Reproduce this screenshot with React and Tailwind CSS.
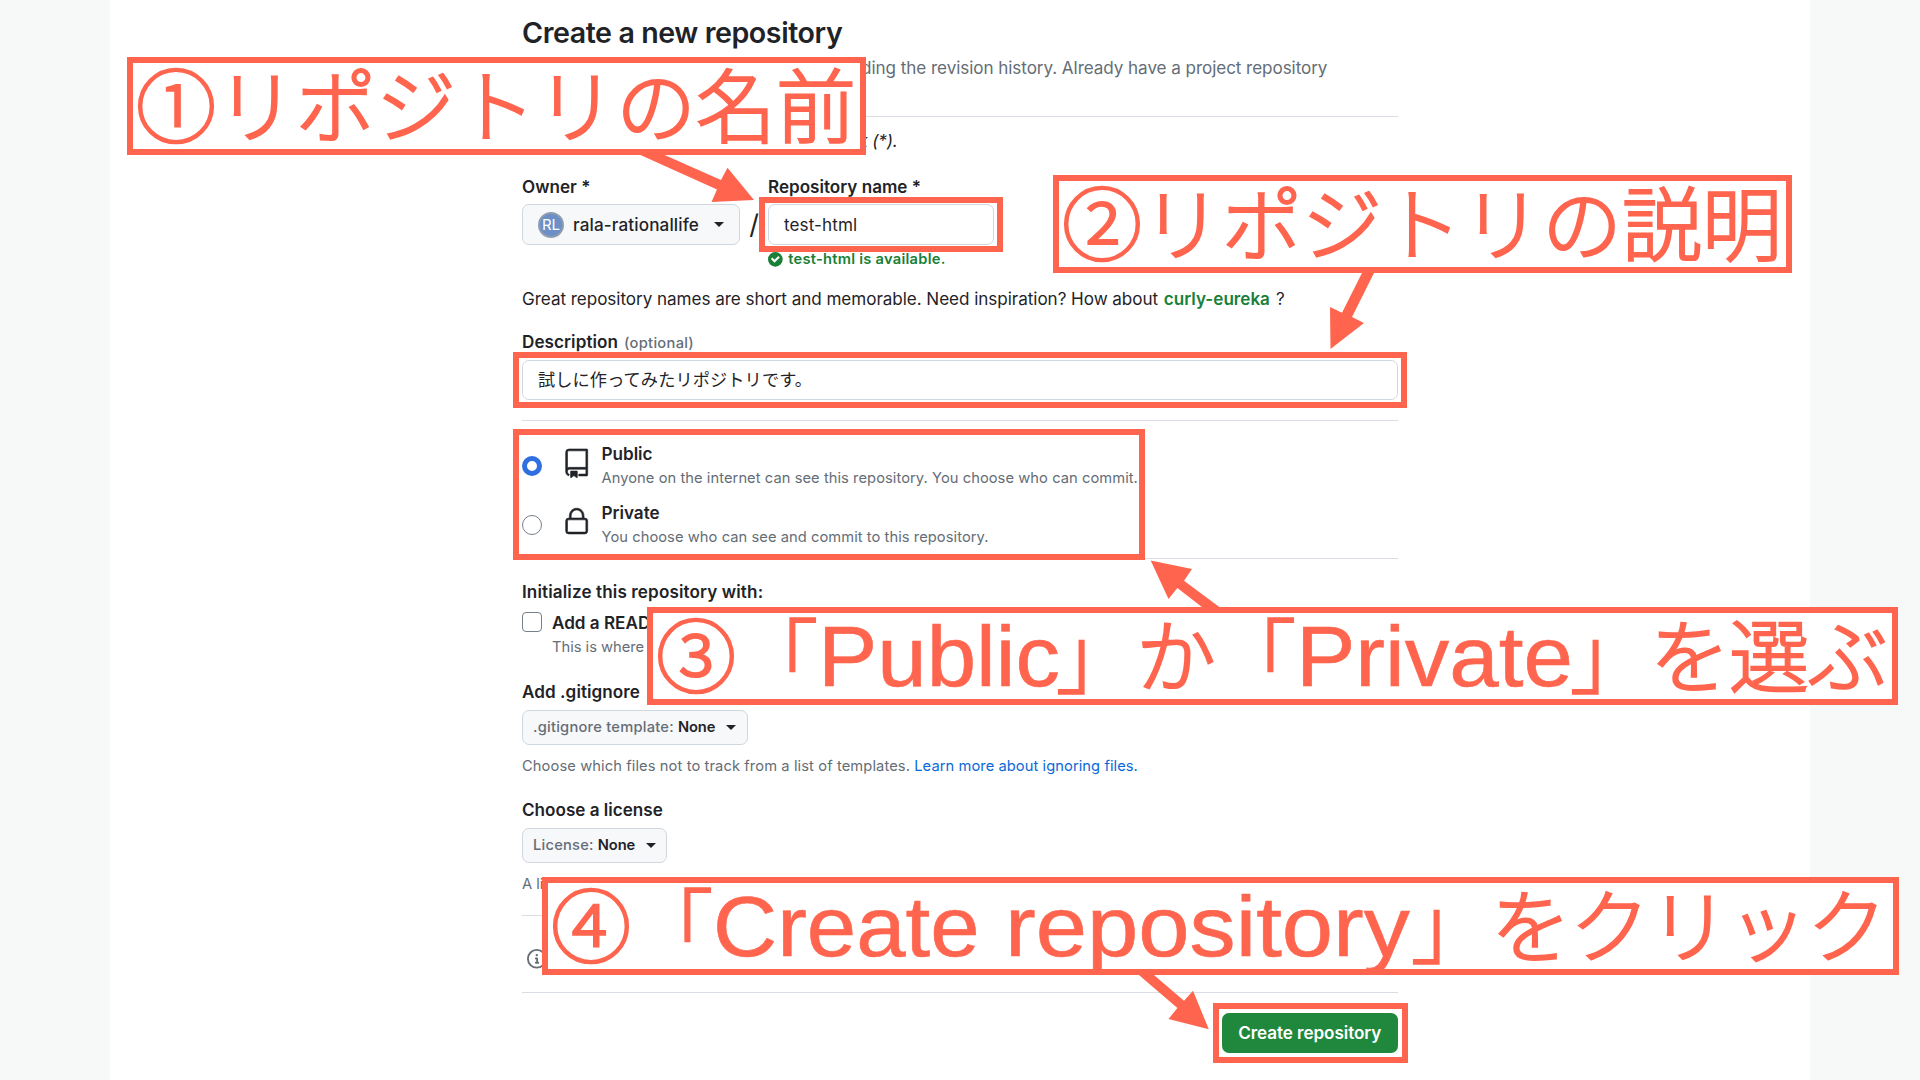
import clsx from "clsx";

const body = "text-[17.1px] leading-[26px] whitespace-nowrap";
const small = "text-[14.7px] leading-[20px] whitespace-nowrap";

function Caret() {
  return <span className="h-0 w-0 shrink-0 border-x-[5px] border-t-[5.5px] border-x-transparent border-t-[#1f2328]" />;
}

function Divider({ className }) {
  return <div className={clsx("h-px w-full shrink-0 bg-[#d8dee4]", className)} />;
}

function Icon({ size, box, d, className }) {
  return (
    <svg width={size} height={size} viewBox={box} fill="currentColor" className={clsx("shrink-0 overflow-visible", className)}>
      <path d={d} />
    </svg>
  );
}

const REPO =
  "M3 2.75A2.75 2.75 0 0 1 5.75 0h14.5a.75.75 0 0 1 .75.75v20.5a.75.75 0 0 1-.75.75h-6a.75.75 0 0 1 0-1.5h5.25v-4H6A1.5 1.5 0 0 0 4.5 18v.75c0 .716.43 1.334 1.05 1.605a.75.75 0 0 1-.6 1.374A3.251 3.251 0 0 1 3 18.75ZM19.5 1.5H5.75c-.69 0-1.25.56-1.25 1.25v12.651A2.989 2.989 0 0 1 6 15h13.5ZM7 18.25a.25.25 0 0 1 .25-.25h5a.25.25 0 0 1 .25.25v5.01a.25.25 0 0 1-.397.201l-2.206-1.604a.25.25 0 0 0-.294 0L7.397 23.46a.25.25 0 0 1-.397-.2v-5.01Z";
const LOCK =
  "M6 9V7.25C6 3.845 8.503 1 12 1s6 2.845 6 6.25V9h.5a2.5 2.5 0 0 1 2.5 2.5v8a2.5 2.5 0 0 1-2.5 2.5h-13A2.5 2.5 0 0 1 3 19.5v-8A2.5 2.5 0 0 1 5.5 9Zm-1.5 2.5v8a1 1 0 0 0 1 1h13a1 1 0 0 0 1-1v-8a1 1 0 0 0-1-1h-13a1 1 0 0 0-1 1Zm3-4.25V9h9V7.25c0-2.67-1.922-4.75-4.5-4.75-2.578 0-4.5 2.08-4.5 4.75Z";
const CHECK =
  "M6 0a6 6 0 1 1 0 12A6 6 0 0 1 6 0Zm-.705 8.737L9.63 4.403 8.392 3.166 5.295 6.263l-1.7-1.702L2.356 5.8l2.938 2.938Z";
const INFO =
  "M0 8a8 8 0 1 1 16 0A8 8 0 0 1 0 8Zm8-6.5a6.5 6.5 0 1 0 0 13 6.5 6.5 0 0 0 0-13ZM6.5 7.75A.75.75 0 0 1 7.25 7h1a.75.75 0 0 1 .75.75v2.75h.25a.75.75 0 0 1 0 1.5h-2a.75.75 0 0 1 0-1.5h.25v-2h-.25a.75.75 0 0 1-.75-.75ZM8 6a1 1 0 1 1 0-2 1 1 0 0 1 0 2Z";

function Visibility({ checked, icon, title, text, className }) {
  return (
    <div className={clsx("flex shrink-0", className)}>
      <span
        className={clsx(
          "mt-3.5 size-5 shrink-0 rounded-full",
          checked ? "border-[5.5px] border-[#2f6fe0] bg-white" : "border-[1.5px] border-[#767f88] bg-white"
        )}
      />
      <Icon
        size={29.4}
        box="0 0 24 24"
        d={icon}
        className={clsx("ml-[19.5px] stroke-current stroke-[0.5]", checked ? "mt-[7px]" : "mt-[6px]")}
      />
      <div className="ml-[10.6px]">
        <div className="text-[17.1px] font-semibold leading-[24px]">{title}</div>
        <div className={clsx(small, "mt-0.5 tracking-[0.06px] text-[#656d76]")}>{text}</div>
      </div>
    </div>
  );
}

function SmallSelect({ label, className }) {
  return (
    <div
      className={clsx(
        "flex h-[35px] shrink-0 items-center rounded-[7px] border border-[#d0d7de] bg-[#f6f8fa] pl-2.5 text-[14.7px]",
        className
      )}
    >
      <span className="font-medium tracking-[0.23px] text-[#656d76]">{label}</span>
      <span className="ml-[4px] mr-[11px] font-semibold tracking-[-0.1px]">None</span>
      <Caret />
    </div>
  );
}

function Form() {
  return (
    <form className="flex w-[876px] flex-col font-['Inter','Noto_Sans_CJK_JP',sans-serif] text-[#1f2328]">
      <h1 className="mt-[15px] h-9 shrink-0 text-[28.6px] font-semibold leading-9 tracking-[-0.42px]">
        Create a new repository
      </h1>
      <p className={clsx(body, "mt-1 h-[52px] shrink-0 tracking-[-0.068px] text-[#656d76]")}>
        A repository contains all project files, including the revision history. Already have a project repository
      </p>
      <Divider className="mt-[9px]" />
      <p className={clsx(body, "mt-[11px] tracking-[-0.13px] italic")}>Required fields are marked with an asterisk (*).</p>

      <div className="mt-[20px] flex h-[96px] shrink-0">
        <div className="w-[218px]">
          <div className={clsx(body, "font-semibold")}>Owner *</div>
          <div className="mt-[4px] flex h-[41px] items-center rounded-[7px] border border-[#d0d7de] bg-[#f6f8fa] pl-[15px]">
            <span className="flex size-[26px] shrink-0 items-center justify-center rounded-full border-2 border-[#8f9dad] bg-[#6b8fc6] text-[15px] leading-none text-white">
              RL
            </span>
            <span className="ml-[9px] mr-[15px] text-[17.1px] font-medium tracking-[0.13px]">rala-rationallife</span>
            <Caret />
          </div>
        </div>
        <span className="mt-[37px] w-7 text-center text-[27px] leading-[28px]">/</span>
        <div className="w-[226px]">
          <div className={clsx(body, "font-semibold")}>Repository name *</div>
          <div className="mt-[4px] flex h-[41px] items-center rounded-[7px] border border-[#d0d7de] bg-white pl-[15px] text-[17.1px] tracking-[0.1px]">
            test-html
          </div>
          <div className={clsx(small, "mt-[4px] flex items-center font-semibold tracking-[0.25px] text-[#1a7f37]")}>
            <Icon size={14.7} box="0 0 12 12" d={CHECK} />
            <span className="ml-[5.5px]">test-html is available.</span>
          </div>
        </div>
      </div>

      <p className={clsx(body, "mt-4 tracking-[-0.05px]")}>
        Great repository names are short and memorable. Need inspiration? How about{" "}
        <span className="ml-px font-semibold tracking-normal text-[#1a7f37]">curly-eureka</span>
        <span className="ml-1.5">?</span>
      </p>

      <div className={clsx(body, "mt-[17px] font-semibold tracking-[0.07px]")}>
        Description
        <span className="ml-[6px] text-[14.7px] font-medium tracking-[0.28px] text-[#656d76]">(optional)</span>
      </div>
      <div className="mt-[4px] flex h-10 shrink-0 items-center rounded-[7px] border border-[#d0d7de] bg-white pb-[3px] pl-[15px] font-['Noto_Sans_CJK_JP',sans-serif] text-[17.2px] leading-none tracking-[0.1px]">
        試しに作ってみたリポジトリです。
      </div>
      <Divider className="mt-5" />
      <Visibility
        checked
        icon={REPO}
        title="Public"
        text="Anyone on the internet can see this repository. You choose who can commit."
        className="mt-[21px] h-[58.5px]"
      />
      <Visibility
        icon={LOCK}
        title="Private"
        text="You choose who can see and commit to this repository."
        className="h-[46.5px]"
      />
      <Divider className="mt-[11px]" />

      <div className={clsx(body, "mt-[20px] font-semibold tracking-[0.12px]")}>Initialize this repository with:</div>
      <div className="mt-[5px] flex h-[47px] shrink-0">
        <span className="mt-0.5 size-5 rounded-[4px] border-[1.5px] border-[#767f88] bg-white" />
        <div className="ml-2.5">
          <div className={clsx(body, "font-semibold")}>Add a README</div>
          <div className={clsx(small, "mt-px text-[#656d76]")}>This is where</div>
        </div>
      </div>

      <div className={clsx(body, "mt-[22px] font-semibold tracking-[0.07px]")}>Add .gitignore</div>
      <SmallSelect label=".gitignore template:" className="mt-[5px] w-[226px]" />
      <p className={clsx(small, "mt-[11px] tracking-[0.1px] text-[#656d76]")}>
        Choose which files not to track from a list of templates.{" "}
        <span className="tracking-[0.07px] text-[#0969da]">Learn more about ignoring files.</span>
      </p>

      <div className={clsx(body, "mt-[21px] font-semibold")}>Choose a license</div>
      <SmallSelect label="License:" className="mt-[5px] w-[144.5px]" />
      <p className={clsx(small, "mt-[11px] text-[#656d76]")}>A license</p>
      <Divider className="mt-[21px]" />
      <Icon size={19.6} box="0 0 16 16" d={INFO} className="ml-[5px] mt-[33px] text-[#656d76]" />
      <Divider className="mt-[23.4px]" />
      <div className="mt-[20px] flex h-10 w-[176.5px] shrink-0 items-center justify-center self-end whitespace-nowrap rounded-[7px] bg-[#1f883d] text-[17.1px] font-semibold tracking-[-0.07px] text-white">
        Create repository
      </div>
    </form>
  );
}

const latin =
  "inline-block origin-left font-['Liberation_Sans',sans-serif] text-[85px] leading-[76px] [-webkit-text-stroke:0.6px_#ff654e]";

function Callout({ className, children }) {
  return (
    <div
      className={clsx(
        "absolute h-[98px] whitespace-pre border-[6px] border-[#ff654e] bg-white pl-[3px] font-['Noto_Sans_CJK_JP',sans-serif] text-[80px] font-light leading-[76px] text-[#ff654e] [-webkit-text-stroke:2.2px_#ff654e]",
        className
      )}
    >
      {children}
    </div>
  );
}

function Ring({ className }) {
  return <div className={clsx("absolute border-[6px] border-[#ff654e]", className)} />;
}

function Annotations() {
  return (
    <div className="absolute inset-0">
      <svg width="1920" height="1080" viewBox="0 0 1920 1080" fill="#ff654e" className="absolute inset-0">
        <path d="M636 153 L660 153 L721 180 L727.5 167.7 L754 200 L711.5 202 L717 189.5Z" />
        <path d="M1364 269 L1376 269 L1352 317 L1364 323 L1330.5 349 L1330 307 L1342 312.7Z" />
        <path d="M1150.7 560.5 L1192 569 L1184 580.7 L1222 609 L1204.5 609 L1177.4 588 L1168.5 599Z" />
        <path d="M1136 972.5 L1151 972.5 L1184 1000.7 L1193 990.7 L1208.8 1029.3 L1168.5 1019 L1177.4 1008Z" />
      </svg>
      <Ring className="left-[759px] top-[197px] h-[55px] w-[244px]" />
      <Ring className="left-[513px] top-[352px] h-[56px] w-[893.5px]" />
      <Ring className="left-[513px] top-[429px] h-[131px] w-[632px]" />
      <Ring className="left-[1213px] top-[1003px] h-[60px] w-[195px]" />
      <Callout className="left-[127px] top-[57px] w-[739px]">①リポジトリの名前</Callout>
      <Callout className="left-[1053px] top-[175px] w-[739px]">②リポジトリの説明</Callout>
      <Callout className="left-[647px] top-[607px] w-[1251px]">
        ③<span className="ml-0.5">「</span>
        <span className={clsx(latin, "w-[238px] scale-x-[1.045]")}>Public</span>」か「
        <span className={clsx(latin, "w-[274px] scale-x-[1.047]")}>Private</span>」<span className="tracking-[-1px]">を選ぶ</span>
      </Callout>
      <Callout className="left-[542px] top-[877px] w-[1357px]">
        ④<span className="ml-0.5">「</span>
        <span className={clsx(latin, "w-[292px] scale-x-[1.045]")}>Create </span>
        <span className={clsx(latin, "w-[406px] scale-x-[1.085]")}>repository</span>」
        <span className="tracking-[-1px]">をクリック</span>
      </Callout>
    </div>
  );
}

export default function App() {
  return (
    <div className="relative flex h-[1080px] w-[1920px] justify-center overflow-hidden bg-[#f7f8f8]">
      <main className="flex w-[1700px] justify-center bg-white">
        <Form />
      </main>
      <Annotations />
    </div>
  );
}
